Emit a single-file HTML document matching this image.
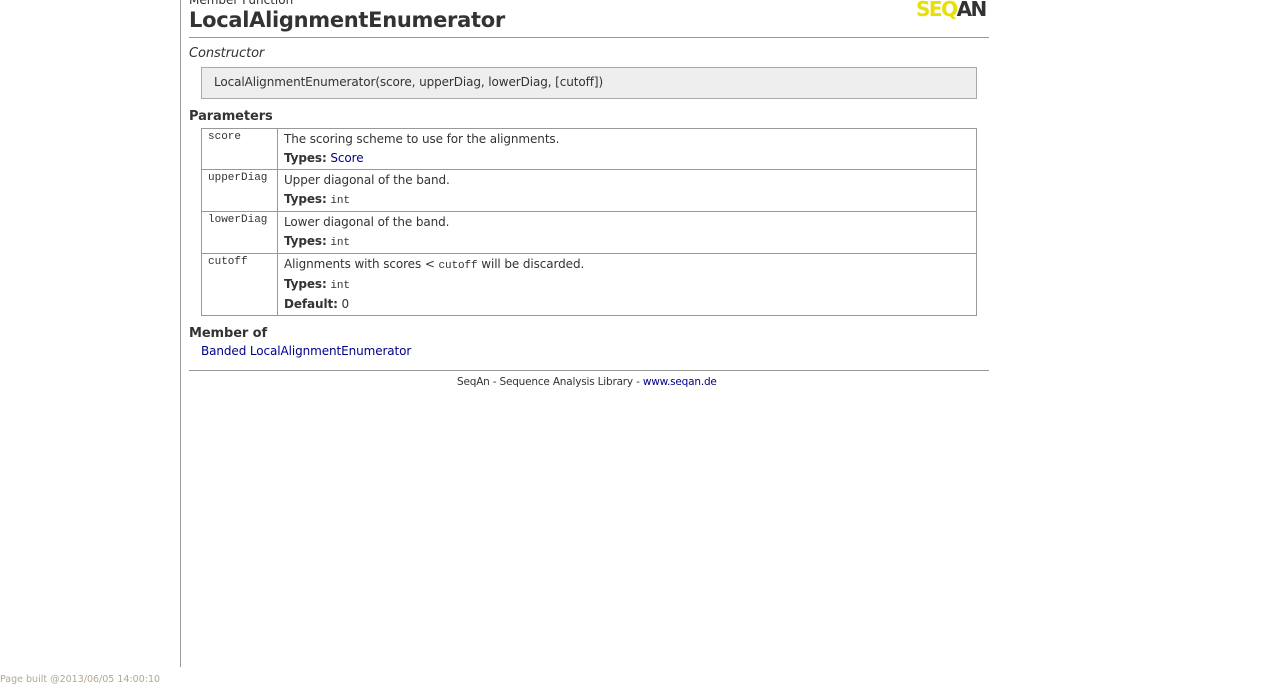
<!DOCTYPE html>
<html><head><meta charset="utf-8"><style>
body{margin:0;width:1276px;height:683px;background:#fff;font-family:"DejaVu Sans","Liberation Sans",sans-serif;color:#333;position:relative;overflow:hidden}
.a{position:absolute;white-space:nowrap}
.m{font-family:"Liberation Mono",monospace;font-size:11px}
a{color:#00008b;text-decoration:none}
.t{font-size:12px;letter-spacing:-0.1px}
</style></head><body>
<div class="a" style="left:180px;top:0;width:1px;height:667px;background:#999"></div>
<div class="a" style="left:0;top:674px;font-size:9.5px;color:#b0a890">Page built @2013/06/05 14:00:10</div>
<div class="a" style="left:189px;top:-7px;font-size:12px;color:#333">Member Function</div>
<div class="a" style="left:189px;top:8px;font-size:21px;font-weight:bold;color:#333;letter-spacing:-0.3px">LocalAlignmentEnumerator</div>
<div class="a" style="left:916px;top:-3px;font-size:20px;font-weight:bold;color:#e8e000;letter-spacing:-1.5px">SEQ<span style="color:#333">AN</span></div>
<div class="a" style="left:189px;top:37px;width:800px;height:1px;background:#999"></div>
<div class="a t" style="left:189px;top:46px;font-style:italic;font-size:13px">Constructor</div>
<div class="a t" style="left:201px;top:67px;width:774px;height:30px;background:#eee;border:1px solid #aaa"></div>
<div class="a t" style="left:214px;top:75px">LocalAlignmentEnumerator(score, upperDiag, lowerDiag, [cutoff])</div>
<div class="a t" style="left:189px;top:109px;font-weight:bold;font-size:13px">Parameters</div>
<div class="a" style="left:201px;top:128px;width:774px;height:186px;border:1px solid #999"></div>
<div class="a" style="left:277px;top:128px;width:1px;height:188px;background:#999"></div>
<div class="a" style="left:201px;top:169px;width:776px;height:1px;background:#999"></div>
<div class="a" style="left:201px;top:211px;width:776px;height:1px;background:#999"></div>
<div class="a" style="left:201px;top:253px;width:776px;height:1px;background:#999"></div>
<div class="a m" style="left:208px;top:131px">score</div>
<div class="a m" style="left:208px;top:172px">upperDiag</div>
<div class="a m" style="left:208px;top:214px">lowerDiag</div>
<div class="a m" style="left:208px;top:256px">cutoff</div>
<div class="a t" style="left:284px;top:132px">The scoring scheme to use for the alignments.</div>
<div class="a t" style="left:284px;top:151px"><b>Types:</b> <a>Score</a></div>
<div class="a t" style="left:284px;top:173px">Upper diagonal of the band.</div>
<div class="a t" style="left:284px;top:192px"><b>Types:</b> <span class="m">int</span></div>
<div class="a t" style="left:284px;top:215px">Lower diagonal of the band.</div>
<div class="a t" style="left:284px;top:234px"><b>Types:</b> <span class="m">int</span></div>
<div class="a t" style="left:284px;top:257px">Alignments with scores &lt; <span class="m">cutoff</span> will be discarded.</div>
<div class="a t" style="left:284px;top:277px"><b>Types:</b> <span class="m">int</span></div>
<div class="a t" style="left:284px;top:297px"><b>Default:</b> 0</div>
<div class="a t" style="left:189px;top:326px;font-weight:bold;font-size:13px">Member of</div>
<div class="a t" style="left:201px;top:344px"><a>Banded LocalAlignmentEnumerator</a></div>
<div class="a" style="left:189px;top:370px;width:800px;height:1px;background:#999"></div>
<div class="a" style="left:457px;top:376px;font-size:10.5px;letter-spacing:-0.2px">SeqAn - Sequence Analysis Library - <a>www.seqan.de</a></div>
</body></html>
